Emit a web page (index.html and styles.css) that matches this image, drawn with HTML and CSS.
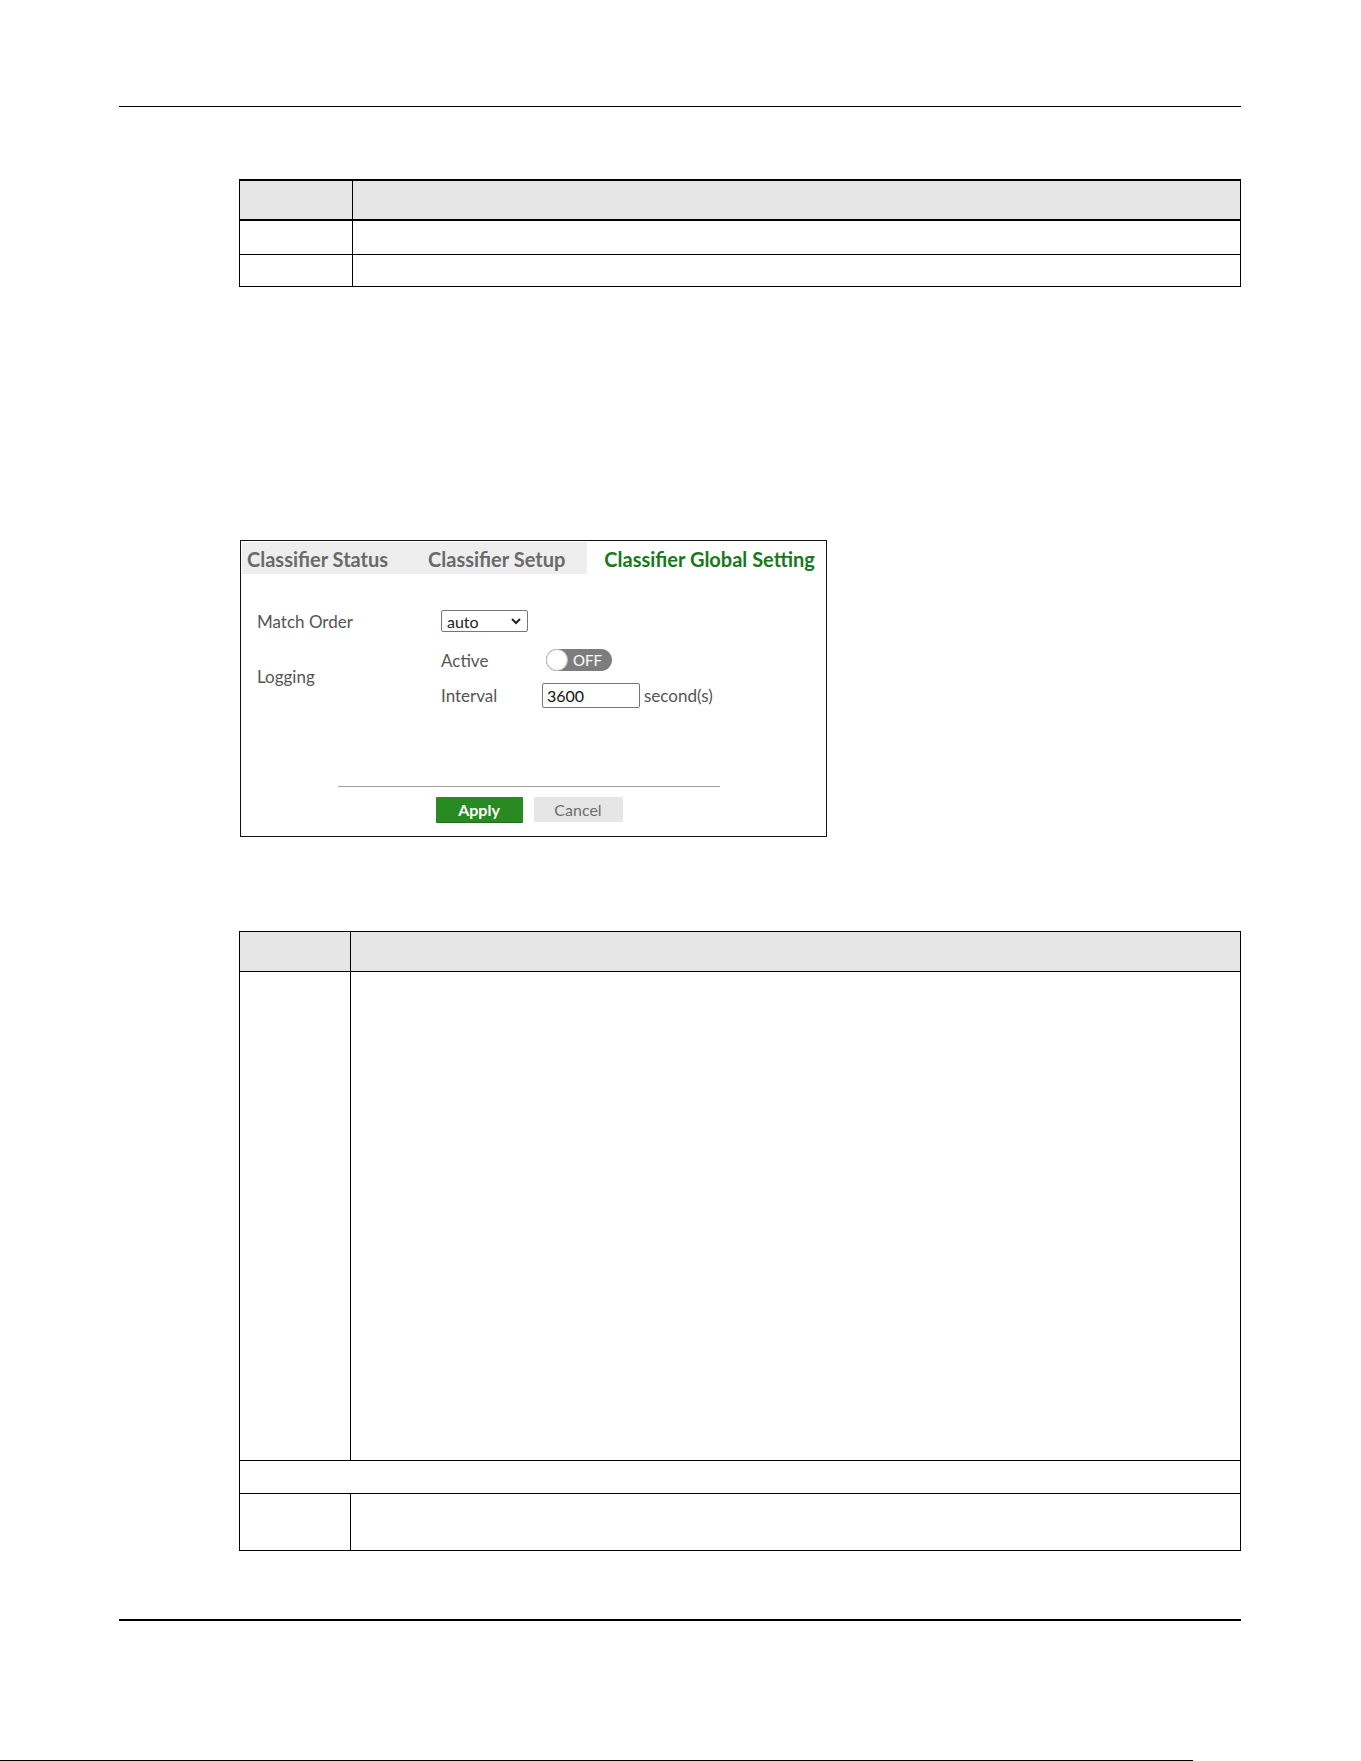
FILE: index.html
```html
<!DOCTYPE html>
<html lang="en">
<head>
<meta charset="utf-8">
<title>Classifier Global Setting</title>
<link rel="stylesheet" href="styles.css">
</head>
<body>
  <div class="rule rule-top"></div>

  <div class="doc-table t1">
    <div class="tr head"><div class="td"></div><div class="td"></div></div>
    <div class="tr r1"><div class="td"></div><div class="td"></div></div>
    <div class="tr r2"><div class="td"></div><div class="td"></div></div>
  </div>

  <div class="panel">
    <div class="tabs">
      <div class="tab first">Classifier Status</div>
      <div class="tab">Classifier Setup</div>
      <div class="tab active">Classifier Global Setting</div>
    </div>

    <div class="form">
      <div class="field">
        <div class="label">Match Order</div>
        <div class="select">
          <span>auto</span>
          <svg class="chevron" width="10" height="7" viewBox="0 0 10 7"><polyline points="1,1 5,5 9,1" fill="none" stroke="#222" stroke-width="2"/></svg>
        </div>
      </div>

      <div class="field logging">
        <div class="label">Logging</div>
        <div class="sub">
          <div class="subrow">
            <span class="sublabel">Active</span>
            <span class="toggle"><span class="knob"></span><span class="toggle-text">OFF</span></span>
          </div>
          <div class="subrow">
            <span class="sublabel">Interval</span>
            <input class="text" type="text" value="3600">
            <span class="unit">second(s)</span>
          </div>
        </div>
      </div>
    </div>

    <div class="actions">
      <button class="btn apply" type="button">Apply</button>
      <button class="btn cancel" type="button">Cancel</button>
    </div>
  </div>

  <div class="doc-table t2">
    <div class="tr head"><div class="td"></div><div class="td"></div></div>
    <div class="tr big"><div class="td"></div><div class="td"></div></div>
    <div class="tr span"><div class="td wide"></div></div>
    <div class="tr last"><div class="td"></div><div class="td"></div></div>
  </div>

  <div class="rule rule-bottom"></div>
  <div class="edge"></div>
</body>
</html>
```

FILE: styles.css
```css
html, body {
  margin: 0;
  padding: 0;
  background: #fff;
}

body {
  height: 1761px;
  overflow: hidden;
  font-family: Lato, "DejaVu Sans", sans-serif;
  color: #222;
}

/* page rules */
.rule {
  margin-left: 119px;
  width: 1122px;
}

.rule-top {
  margin-top: 106px;
  border-top: 1px solid #000;
}

.rule-bottom {
  margin-top: 68px;
  border-top: 2px solid #000;
}

.edge {
  margin-top: 139px;
  width: 1193px;
  border-top: 1px solid #000;
}

/* description tables */
.doc-table {
  margin-left: 239px;
  width: 1002px;
  box-sizing: border-box;
  border: 1px solid #000;
}

.tr {
  display: grid;
  border-bottom: 1px solid #000;
}

.tr:last-child {
  border-bottom: 0;
}

.td:first-child {
  border-right: 1px solid #000;
}

.td.wide {
  border-right: 0;
}

.head {
  background: #e6e6e6;
}

.t1 {
  margin-top: 72px;
  border-top-width: 2px;
}

.t1 .tr {
  grid-template-columns: 113px 1fr;
}

.t1 .head {
  height: 38px;
  border-bottom-width: 2px;
}

.t1 .r1 {
  height: 33px;
}

.t1 .r2 {
  height: 31px;
}

.t2 {
  margin-top: 94px;
}

.t2 .tr {
  grid-template-columns: 111px 1fr;
}

.t2 .head {
  height: 39px;
}

.t2 .big {
  height: 488px;
}

.t2 .span {
  height: 32px;
  grid-template-columns: 1fr;
}

.t2 .last {
  height: 56px;
}

/* web configurator panel */
.panel {
  margin: 253px 0 0 240px;
  width: 587px;
  height: 297px;
  box-sizing: border-box;
  border: 1px solid #111;
  padding: 1px;
}

.tabs {
  display: flex;
  height: 32px;
  overflow: hidden;
}

.tab {
  flex: none;
  padding: 0 20px;
  line-height: 34px;
  font-size: 20px;
  font-weight: 700;
  color: #6a6a6a;
  background: #eeeeee;
  white-space: nowrap;
}

.tab.first {
  padding-left: 5px;
}

.tab.active {
  flex: 1 1 auto;
  min-width: 0;
  padding: 0 0 0 19px;
  color: #17781d;
  background: #fff;
  box-shadow: inset 3px 0 3px -2px rgba(0, 0, 0, 0.12);
}

.form {
  margin-top: 36px;
  padding-left: 15px;
}

.field {
  display: flex;
  align-items: center;
}

.label {
  width: 184px;
  font-size: 17px;
  color: #555;
}

.logging {
  margin-top: 17px;
}

.logging .label {
  position: relative;
  top: -2px;
}

.select {
  box-sizing: border-box;
  width: 87px;
  height: 22px;
  border: 1px solid #767676;
  border-radius: 2px;
  padding: 0 6px 0 5px;
  display: flex;
  align-items: center;
  justify-content: space-between;
  font-size: 16px;
  color: #222;
}

.sub {
  display: flex;
  flex-direction: column;
  gap: 12px;
}

.subrow {
  display: flex;
  align-items: center;
}

.sublabel {
  width: 101px;
  font-size: 17px;
  color: #555;
}

.toggle {
  margin-left: 4px;
  width: 66px;
  height: 22px;
  border-radius: 11px;
  background: #7d7d7d;
  display: flex;
  align-items: center;
}

.knob {
  box-sizing: border-box;
  width: 22px;
  height: 22px;
  border-radius: 50%;
  background: radial-gradient(circle at 45% 40%, #fff 55%, #e4e4e4 100%);
  border: 1px solid #c8c8c8;
}

.toggle-text {
  margin-left: 5px;
  font-size: 15px;
  color: #fff;
}

.text {
  box-sizing: border-box;
  width: 98px;
  height: 25px;
  margin: 0;
  border: 1px solid #767676;
  border-radius: 2px;
  padding: 0 4px;
  font-family: inherit;
  font-size: 16px;
  color: #111;
  outline: none;
}

.unit {
  margin-left: 4px;
  font-size: 17px;
  color: #555;
}

.actions {
  margin: 78px 0 0 96px;
  width: 382px;
  border-top: 1px solid #a0a0a0;
  padding-top: 10px;
  display: flex;
  justify-content: center;
  gap: 11px;
}

.btn {
  height: 25px;
  border: 0;
  border-radius: 1px;
  padding: 0;
  font-family: inherit;
  font-size: 16px;
  cursor: pointer;
}

.apply {
  width: 87px;
  background: #2a8a22;
  color: #fff;
  font-weight: 700;
  box-shadow: 0 1px 0 #1f6b19;
}

.cancel {
  width: 89px;
  background: #e6e6e6;
  color: #6e6e6e;
}
```
